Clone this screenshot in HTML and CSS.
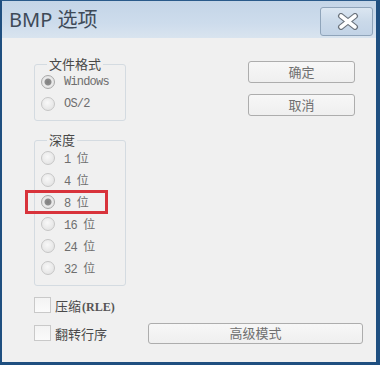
FILE: index.html
```html
<!DOCTYPE html>
<html lang="zh-CN">
<head>
    <meta charset="UTF-8">
    <title>BMP 选项</title>
    <link rel="stylesheet" href="styles.css">
</head>
<body>
    <div class="window">
        <div class="titlebar">
            <span class="title">BMP 选项</span>
            <button class="close-btn" type="button">
                <svg width="22" height="17" viewBox="0 0 22 17">
                    <path d="M4 3 L18 14 M18 3 L4 14" stroke="#6b737c" stroke-width="6" stroke-linecap="round"/>
                    <path d="M4 3 L18 14 M18 3 L4 14" stroke="#ffffff" stroke-width="3.6" stroke-linecap="round"/>
                </svg>
            </button>
        </div>

        <div class="client">
            <div class="top">
                <div class="groups">
                    <fieldset class="group">
                        <legend>文件格式</legend>
                        <label class="radio-row"><span class="radio checked"></span><span class="mono">Windows</span></label>
                        <label class="radio-row"><span class="radio"></span><span class="mono">OS/2</span></label>
                    </fieldset>

                    <fieldset class="group depth">
                        <legend>深度</legend>
                        <label class="radio-row"><span class="radio"></span><span class="mono">1 位</span></label>
                        <label class="radio-row"><span class="radio"></span><span class="mono">4 位</span></label>
                        <label class="radio-row marked"><span class="radio checked"></span><span class="mono">8 位</span><span class="highlight"></span></label>
                        <label class="radio-row"><span class="radio"></span><span class="mono">16 位</span></label>
                        <label class="radio-row"><span class="radio"></span><span class="mono">24 位</span></label>
                        <label class="radio-row"><span class="radio"></span><span class="mono">32 位</span></label>
                    </fieldset>
                </div>

                <div class="actions">
                    <button class="btn" type="button">确定</button>
                    <button class="btn" type="button">取消</button>
                </div>
            </div>

            <div class="options">
                <label class="check-row"><span class="checkbox"></span><span>压缩<span class="rle">(RLE)</span></span></label>
                <div class="check-row">
                    <label class="check-label"><span class="checkbox"></span>翻转行序</label>
                    <button class="btn wide" type="button">高级模式</button>
                </div>
            </div>
        </div>
    </div>
</body>
</html>
```

FILE: styles.css
```css
* {
    margin: 0;
    padding: 0;
    box-sizing: border-box;
}

body {
    font-family: "Noto Sans CJK SC", "Noto Sans", sans-serif;
    background: #f0f0f0;
    color: #444;
}

.window {
    width: 380px;
    height: 365px;
    border-left: 2px solid #1f4f80;
    border-right: 4px solid #1f4f80;
    border-bottom: 3px solid #1f4f80;
    border-top: 1px solid #2a5a8a;
    display: flex;
    flex-direction: column;
    background: #f0f0f0;
}

.titlebar {
    height: 37px;
    display: flex;
    align-items: flex-start;
    padding: 6px 3px 0 7px;
    background: linear-gradient(to bottom, #c4d5e7 0%, #cddcec 60%, #d9e4ef 100%);
}

.title {
    font-family: "Noto Sans", "Noto Sans CJK SC", sans-serif;
    font-size: 20px;
    line-height: 26px;
    color: #3e4a58;
}

.close-btn {
    margin-left: auto;
    width: 53px;
    height: 29px;
    border: 1px solid #8fa4ba;
    border-radius: 3px;
    background: linear-gradient(to bottom, #dbe6f1 0%, #cad9e9 50%, #c2d3e6 100%);
    display: flex;
    align-items: center;
    justify-content: center;
    padding-left: 3px;
}

.client {
    flex: 1;
    padding: 19px 13px 0 32px;
}

.top {
    display: flex;
}

.groups {
    width: 92px;
}

.group {
    border: 1px solid #d4dbe1;
    border-radius: 3px;
    padding: 0 0 5px 6px;
    min-inline-size: 0;
}

.group legend {
    font-size: 13px;
    line-height: 14px;
    padding: 0 2px;
    margin-left: 6px;
    color: #484848;
}

.group.depth {
    margin-top: 12px;
    padding-bottom: 6px;
}

.radio-row {
    position: relative;
    display: flex;
    align-items: center;
    gap: 9px;
    height: 22px;
    color: #6e6e6e;
}

.radio {
    width: 14px;
    height: 14px;
    border-radius: 50%;
    border: 1px solid #c6c6c6;
    background: radial-gradient(circle at 45% 40%, #f8f8f8 0%, #e6e6e6 70%, #dcdcdc 100%);
    flex-shrink: 0;
}

.radio.checked {
    border-color: #a9a9a9;
    background: radial-gradient(circle, #7e7e7e 0, #8e8e8e 3px, #ececec 4px, #d9d9d9 100%);
}

.mono {
    font-family: "Liberation Mono", "Noto Sans CJK SC", monospace;
    font-size: 12px;
    letter-spacing: -0.8px;
}

.highlight {
    position: absolute;
    left: -16px;
    top: -1px;
    width: 83px;
    height: 24px;
    border: 3px solid #d8333b;
}

.actions {
    margin-left: 122px;
    padding-top: 4px;
    display: flex;
    flex-direction: column;
    gap: 11px;
}

.btn {
    width: 107px;
    height: 22px;
    border: 1px solid #adadad;
    border-radius: 3px;
    background: linear-gradient(to bottom, #f7f7f7 0%, #efefef 100%);
    font-family: "Noto Sans CJK SC", sans-serif;
    font-size: 13px;
    line-height: 18px;
    color: #6f6f6f;
}

.btn.wide {
    width: 215px;
    height: 21px;
    margin-left: auto;
}

.options {
    margin-top: 5px;
}

.check-row {
    display: flex;
    align-items: center;
    height: 28px;
    font-size: 13px;
    color: #4a4a4a;
}

.check-label {
    display: flex;
    align-items: center;
}

.checkbox {
    width: 17px;
    height: 16px;
    border: 1px solid #c9c9c9;
    background: linear-gradient(to bottom, #f3f3f3, #fafafa);
    margin-right: 4px;
    flex-shrink: 0;
}

.rle {
    font-family: "Liberation Serif", serif;
    font-size: 12px;
    font-weight: bold;
    color: #555;
    margin-left: 1px;
}
```
